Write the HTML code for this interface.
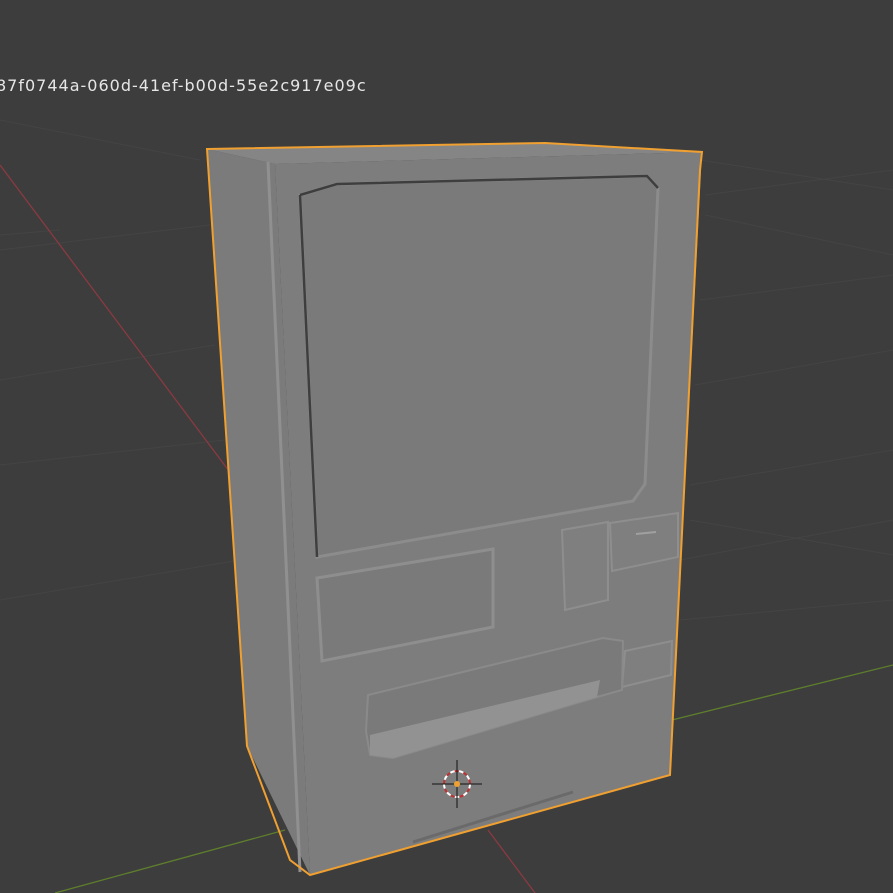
<!DOCTYPE html>
<html><head><style>
html,body{margin:0;padding:0;background:#3d3d3d;width:893px;height:893px;overflow:hidden}
svg{display:block}
.t{position:absolute;left:-4px;top:76px;color:#e6e6e6;font:16px "DejaVu Sans","Liberation Sans",sans-serif;letter-spacing:1px}
</style></head><body>
<svg width="893" height="893" viewBox="0 0 893 893">
<rect width="893" height="893" fill="#3d3d3d"/>
<g stroke="#444" stroke-width="1" fill="none">
<path d="M0 250 L210 225 M0 380 L215 345 M0 465 L225 440 M0 600 L240 560 M0 235 L60 230 M705 195 L893 170 M700 300 L893 275 M695 385 L893 350 M690 485 L893 450 M680 560 L893 520 M680 620 L893 600 M0 120 L200 160 M700 160 L893 190 M705 215 L893 255 M690 520 L893 555"/>
</g>
<path d="M0 165 L232 475 M488 830 L535 893" stroke="#8a3a40" stroke-width="1.3"/>
<path d="M55 893 L285 830 M672 720 L893 665" stroke="#5e7f2c" stroke-width="1.3"/>
<polygon points="207,149 275,164 310,875 247,746" fill="#7b7b7b"/>
<polygon points="207,149 545,143 702,152 275,164" fill="#858585"/>
<polygon points="275,164 702,152 670,775 310,875" fill="#7d7d7d"/>
<path d="M268 162 L300 872" stroke="#909090" stroke-width="3"/>
<polygon points="300,195 337,184 647,176 658,188 645,484 633,501 317,557" fill="#7a7a7a" stroke="#8c8c8c" stroke-width="3"/>
<path d="M300 195 L337 184 L647 176 L658 188 M300 195 L317 557" stroke="#3e3e3e" stroke-width="2.5" fill="none"/>
<polygon points="317,578 493,549 493,627 322,661" fill="#7a7a7a" stroke="#8e8e8e" stroke-width="3"/>
<polygon points="562,530 608,522 608,600 565,610" fill="#7f7f7f" stroke="#8e8e8e" stroke-width="2"/>
<polygon points="610,523 678,513 678,557 612,571" fill="#7f7f7f" stroke="#8e8e8e" stroke-width="2"/>
<path d="M636 534 L656 532" stroke="#a0a0a0" stroke-width="2"/>
<polygon points="625,651 672,641 671,675 622,687" fill="#7f7f7f" stroke="#8e8e8e" stroke-width="2"/>
<polygon points="368,695 603,638 623,641 622,690 597,697 393,758 370,755 366,731" fill="#7a7a7a" stroke="#8a8a8a" stroke-width="2"/>
<polygon points="370,735 600,680 597,697 393,758 370,755" fill="#929292"/>
<path d="M413 842 L573 792" stroke="#6a6a6a" stroke-width="3"/>
<path d="M207,149 L545,143 L702,152 L700,170 L670,775 L310,875 L290,860 L247,746 Z" fill="none" stroke="#f0a030" stroke-width="2"/>
<g>
<circle cx="457" cy="784" r="13" fill="none" stroke="#fff" stroke-width="2" stroke-dasharray="5 4"/>
<circle cx="457" cy="784" r="13" fill="none" stroke="#c03030" stroke-width="2" stroke-dasharray="4 5" stroke-dashoffset="4.5"/>
<path d="M457 760 V808 M432 784 H482" stroke="#111" stroke-width="1"/>
<circle cx="457" cy="784" r="3" fill="#f0a030"/>
</g>
</svg>
<div class="t">87f0744a-060d-41ef-b00d-55e2c917e09c</div>
</body></html>
